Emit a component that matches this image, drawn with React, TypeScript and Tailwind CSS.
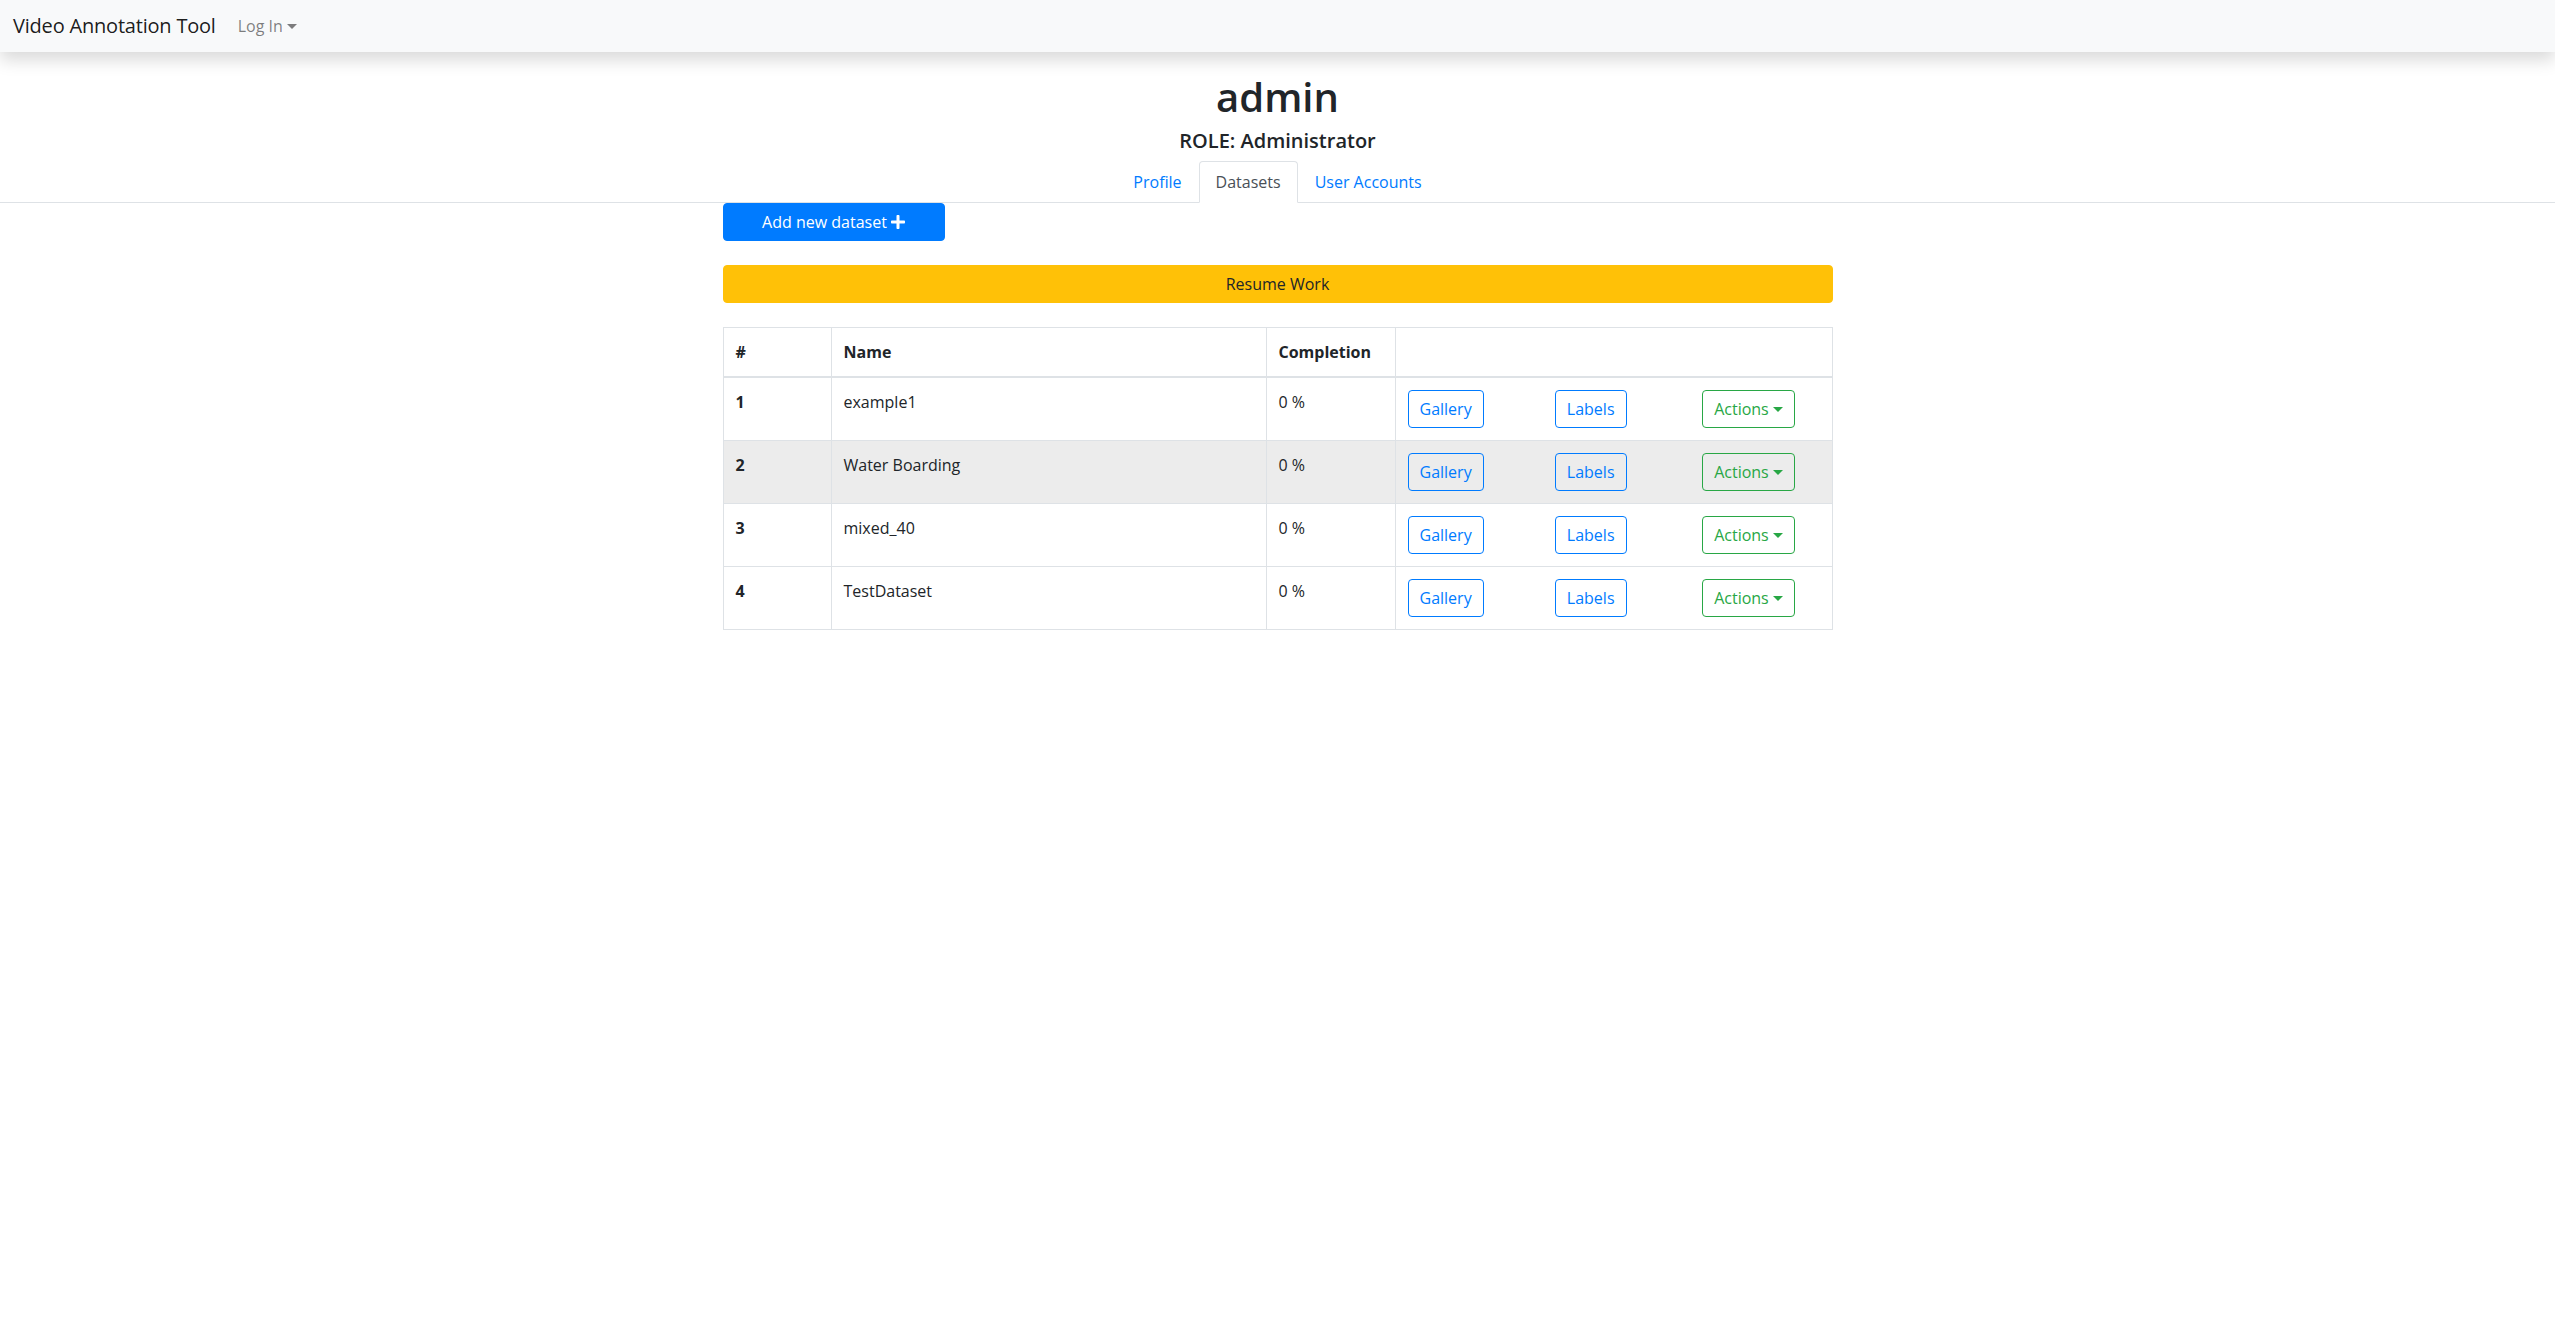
import { ReactNode } from "react";

type Dataset = {
  id: number;
  name: string;
  completion: number;
};

const datasets: Dataset[] = [
  { id: 1, name: "example1", completion: 0 },
  { id: 2, name: "Water Boarding", completion: 0 },
  { id: 3, name: "mixed_40", completion: 0 },
  { id: 4, name: "TestDataset", completion: 0 }
];

// highlighted row in the screenshot (mouse hover)
const hoveredRow = 2;

function Caret({ color }: { color: string }) {
  return (
    <span
      className={`ml-[4px] inline-block h-0 w-0 border-x-[5px] border-t-[5px] border-b-0 border-x-transparent align-[3px] ${color}`}
    />
  );
}

function PlusIcon() {
  return (
    <svg viewBox="0 0 448 512" className="ml-[4px] inline-block h-[16px] w-[14px] align-[-2px]" fill="currentColor">
      <path d="M416 208H272V64c0-17.67-14.33-32-32-32h-32c-17.67 0-32 14.33-32 32v144H32c-17.67 0-32 14.33-32 32v32c0 17.67 14.33 32 32 32h144v144c0 17.67 14.33 32 32 32h32c17.67 0 32-14.33 32-32V304h144c17.67 0 32-14.33 32-32v-32c0-17.67-14.33-32-32-32z" />
    </svg>
  );
}

function OutlineButton({ children, tone }: { children: ReactNode; tone: "primary" | "success" }) {
  const colors =
    tone === "primary" ? "border-[#007bff] text-[#007bff]" : "border-[#28a745] text-[#28a745]";
  return (
    <button className={`h-[38px] rounded-[4px] border bg-transparent px-[11px] text-[16px] leading-[24px] ${colors}`}>
      {children}
    </button>
  );
}

function Navbar() {
  return (
    <nav className="relative z-10 flex h-[52px] items-center bg-[#f8f9fa] pl-[13px] shadow-[0_8px_16px_rgba(0,0,0,0.15)]">
      <span className="mr-[14px] text-[20px] leading-[30px] tracking-[-0.2px] text-[rgba(0,0,0,0.9)]">
        Video Annotation Tool
      </span>
      <span className="px-[8px] text-[16px] leading-[24px] text-[rgba(0,0,0,0.5)]">
        Log In
        <Caret color="border-t-[rgba(0,0,0,0.5)]" />
      </span>
    </nav>
  );
}

function ProfileTabs() {
  const tabs = ["Profile", "Datasets", "User Accounts"];
  return (
    <ul className="flex justify-center border-b border-[#dee2e6]">
      {tabs.map((tab) => {
        const active = tab === "Datasets";
        return (
          <li key={tab} className="-mb-px">
            <span
              className={
                active
                  ? "block rounded-t-[4px] border border-[#dee2e6] border-b-white bg-white px-[16px] py-[8px] text-[16px] leading-[24px] text-[#495057]"
                  : "block border border-transparent px-[16px] py-[8px] text-[16px] leading-[24px] text-[#007bff]"
              }
            >
              {tab}
            </span>
          </li>
        );
      })}
    </ul>
  );
}

function DatasetTable() {
  return (
    <table className="w-full table-fixed border-collapse text-[16px] leading-[24px] text-[#212529]">
      <thead>
        <tr>
          <th className="w-[108px] border border-b-2 border-[#dee2e6] p-[12px] text-left font-bold">#</th>
          <th className="w-[435px] border border-b-2 border-[#dee2e6] p-[12px] text-left font-bold">Name</th>
          <th className="w-[129px] border border-b-2 border-[#dee2e6] p-[12px] text-left font-bold">Completion</th>
          <th className="border border-b-2 border-[#dee2e6] p-[12px]"></th>
        </tr>
      </thead>
      <tbody>
        {datasets.map((d) => (
          <tr key={d.id} className={d.id === hoveredRow ? "bg-[#ececec]" : "bg-white"}>
            <th className="border border-[#dee2e6] p-[12px] text-left align-top font-bold">{d.id}</th>
            <td className="border border-[#dee2e6] p-[12px] align-top">{d.name}</td>
            <td className="border border-[#dee2e6] p-[12px] align-top">{d.completion} %</td>
            <td className="border border-[#dee2e6] p-[12px] align-top">
              <div className="-mx-[15px] grid grid-cols-3">
                <div className="px-[15px]">
                  <OutlineButton tone="primary">Gallery</OutlineButton>
                </div>
                <div className="px-[15px]">
                  <OutlineButton tone="primary">Labels</OutlineButton>
                </div>
                <div className="px-[15px]">
                  <OutlineButton tone="success">
                    Actions
                    <Caret color="border-t-[#28a745]" />
                  </OutlineButton>
                </div>
              </div>
            </td>
          </tr>
        ))}
      </tbody>
    </table>
  );
}

export default function App() {
  return (
    <div className="min-h-screen bg-white font-['Open_Sans',sans-serif] text-[#212529]">
      <Navbar />

      <div className="pt-[21px] text-center">
        <h1 className="mb-[8px] text-[40px] leading-[48px] font-semibold">admin</h1>
        <h5 className="mb-[8px] text-[20px] leading-[24px] font-semibold">ROLE: Administrator</h5>
      </div>

      <ProfileTabs />

      <div className="mx-auto w-[1110px]">
        <button className="mb-[24px] h-[38px] w-1/5 rounded-[4px] border border-[#007bff] bg-[#007bff] text-[16px] leading-[24px] text-white">
          Add new dataset
          <PlusIcon />
        </button>

        <button className="mb-[24px] block h-[38px] w-full rounded-[4px] border border-[#ffc107] bg-[#ffc107] text-[16px] leading-[24px] text-[#212529]">
          Resume Work
        </button>

        <DatasetTable />
      </div>
    </div>
  );
}
